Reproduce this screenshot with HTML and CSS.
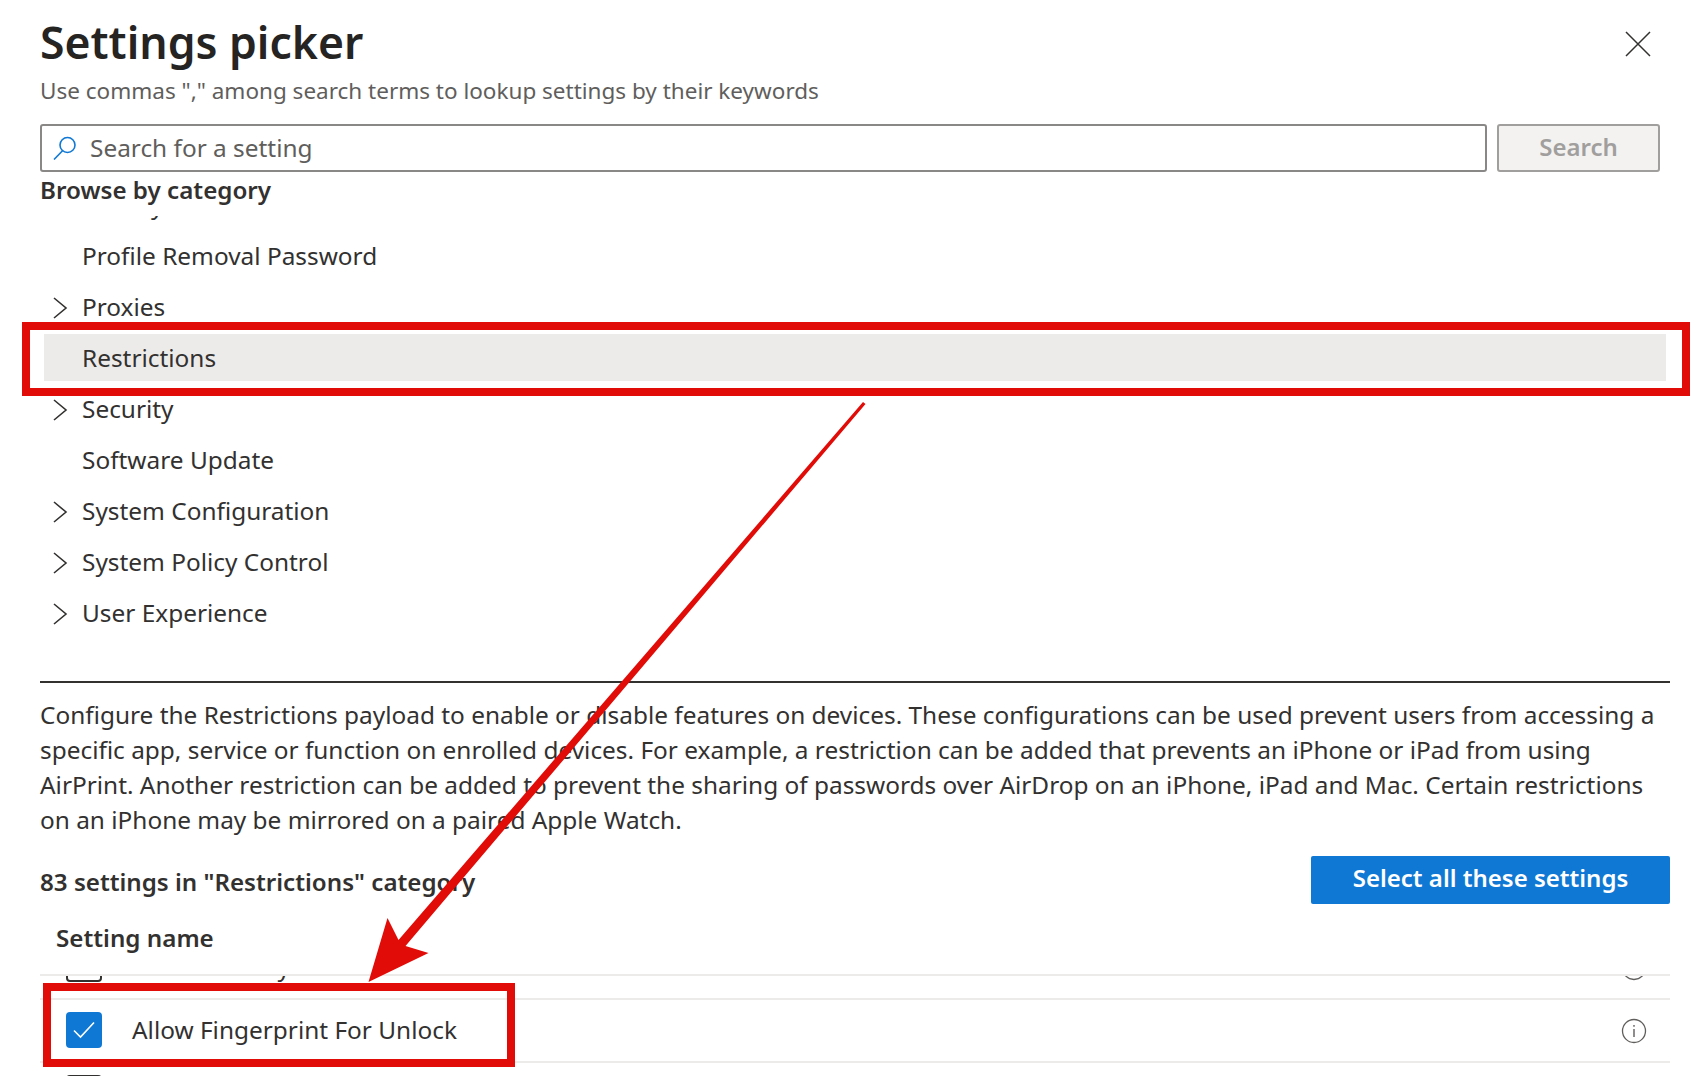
FILE: index.html
```html
<!DOCTYPE html>
<html lang="en">
<head>
  <meta charset="UTF-8" />
  <title>Settings picker</title>
  <link rel="stylesheet" href="styles.css">
</head>
<body>

<div class="picker">
  <header class="picker-head">
    <div>
      <h1>Settings picker</h1>
      <p class="hint">Use commas "," among search terms to lookup settings by their keywords</p>
    </div>
    <button class="close-btn" aria-label="Close">
      <svg width="26" height="26" viewBox="0 0 26 26"><path d="M1 1 L25 25 M25 1 L1 25" stroke="#323130" stroke-width="1.5" fill="none"/></svg>
    </button>
  </header>

  <div class="search-row">
    <div class="search-box">
      <svg width="24" height="24" viewBox="0 0 24 24"><circle cx="14.5" cy="9" r="7.5" stroke="#0f78d4" stroke-width="1.6" fill="none"/><path d="M9.5 14.8 L1 23.5" stroke="#0f78d4" stroke-width="1.6" fill="none"/></svg>
      <input type="text" placeholder="Search for a setting">
    </div>
    <button class="search-btn">Search</button>
  </div>

  <h2 class="browse-title">Browse by category</h2>

  <div class="tree">
    <ul class="tree-list">
      <li class="tree-row"><span class="twisty"></span>Privacy</li>
      <li class="tree-row"><span class="twisty"></span>Profile Removal Password</li>
      <li class="tree-row"><span class="twisty"><svg width="16" height="22" viewBox="0 0 16 22"><path d="M2 1 L14 11 L2 21" stroke="#323130" stroke-width="1.6" fill="none"/></svg></span>Proxies</li>
      <li class="tree-row selected"><span class="twisty"></span>Restrictions</li>
      <li class="tree-row"><span class="twisty"><svg width="16" height="22" viewBox="0 0 16 22"><path d="M2 1 L14 11 L2 21" stroke="#323130" stroke-width="1.6" fill="none"/></svg></span>Security</li>
      <li class="tree-row"><span class="twisty"></span>Software Update</li>
      <li class="tree-row"><span class="twisty"><svg width="16" height="22" viewBox="0 0 16 22"><path d="M2 1 L14 11 L2 21" stroke="#323130" stroke-width="1.6" fill="none"/></svg></span>System Configuration</li>
      <li class="tree-row"><span class="twisty"><svg width="16" height="22" viewBox="0 0 16 22"><path d="M2 1 L14 11 L2 21" stroke="#323130" stroke-width="1.6" fill="none"/></svg></span>System Policy Control</li>
      <li class="tree-row"><span class="twisty"><svg width="16" height="22" viewBox="0 0 16 22"><path d="M2 1 L14 11 L2 21" stroke="#323130" stroke-width="1.6" fill="none"/></svg></span>User Experience</li>
    </ul>
  </div>

  <section class="details">
    <p class="desc">Configure the Restrictions payload to enable or disable features on devices. These configurations can be used prevent users from accessing a<br>
    specific app, service or function on enrolled devices. For example, a restriction can be added that prevents an iPhone or iPad from using<br>
    AirPrint. Another restriction can be added to prevent the sharing of passwords over AirDrop on an iPhone, iPad and Mac. Certain restrictions<br>
    on an iPhone may be mirrored on a paired Apple Watch.</p>

    <div class="count-row">
      <span class="count">83 settings in "Restrictions" category</span>
      <button class="select-all">Select all these settings</button>
    </div>

    <div class="table-head">Setting name</div>
    <div class="table-body">
      <div class="setting">
        <span class="check"></span>
        <span class="setting-name">Allow Find My Friends</span>
        <svg class="info" width="26" height="26" viewBox="0 0 26 26"><circle cx="13" cy="13" r="11.5" stroke="#605e5c" stroke-width="1.3" fill="none"/></svg>
      </div>
      <div class="setting">
        <span class="check on">
          <svg width="24" height="20" viewBox="0 0 24 20"><path d="M2 10.5 L8.5 17 L22 2.5" stroke="#fff" stroke-width="1.6" fill="none"/></svg>
        </span>
        <span class="setting-name">Allow Fingerprint For Unlock</span>
        <svg class="info" width="26" height="26" viewBox="0 0 26 26"><circle cx="13" cy="13" r="11.5" stroke="#605e5c" stroke-width="1.3" fill="none"/><path d="M13 11 V19 M13 7 V8.8" stroke="#605e5c" stroke-width="1.4" fill="none"/></svg>
      </div>
      <div class="setting">
        <span class="check"></span>
      </div>
    </div>
  </section>
</div>

<!-- red markup drawn on top of the screenshot -->
<svg class="markup" width="1704" height="1076" viewBox="0 0 1704 1076">
  <rect x="26" y="326" width="1660" height="66" fill="none" stroke="#e10b07" stroke-width="8"/>
  <rect x="47" y="987" width="464" height="76" fill="none" stroke="#e10b07" stroke-width="8"/>
  <polygon fill="#e10b07" points="863,402 865.5,404 405.5,946 428.5,953 368.5,982 387.5,918 398.5,940"/>
</svg>

</body>
</html>
```

FILE: styles.css
```css
* { box-sizing: border-box; margin: 0; padding: 0; }

html, body {
  width: 1704px;
  height: 1076px;
  overflow: hidden;
}

body {
  position: relative;
  font-family: "Noto Sans", sans-serif;
  font-size: 24.4px;
  color: #323130;
  background: #fff;
}

.picker {
  padding: 0 34px 0 40px;
}

.picker-head {
  display: flex;
  justify-content: space-between;
  height: 124px;
}

h1 {
  font-size: 44.5px;
  font-weight: 600;
  line-height: 60px;
  padding-top: 12px;
  height: 73px;
  color: #252423;
}

.hint {
  color: #605e5c;
  font-size: 22.5px;
  line-height: 36px;
}

.close-btn {
  background: none;
  border: none;
  margin: 31px 19px 0 0;
  height: 26px;
}

.search-row {
  display: flex;
  gap: 10px;
  height: 48px;
  padding-right: 10px;
}

.search-box {
  flex: 1;
  display: flex;
  align-items: center;
  gap: 13px;
  padding-left: 11px;
  border: 2px solid #8a8886;
  border-radius: 3px;
}

.search-box input {
  flex: 1;
  border: none;
  outline: none;
  font: inherit;
  color: #323130;
  padding-bottom: 2px;
}

.search-box input::placeholder {
  color: #605e5c;
  opacity: 1;
}

.search-btn {
  width: 163px;
  background: #f3f2f1;
  border: 2px solid #a19f9d;
  border-radius: 3px;
  font: 600 24px "Noto Sans", sans-serif;
  color: #a19f9d;
  padding-bottom: 4px;
}

.browse-title {
  font-size: 24.2px;
  font-weight: 600;
  line-height: 36px;
  height: 44px;
}

.tree {
  height: 465px;
  overflow: hidden;
  margin-right: 4px;
}

.tree-list {
  list-style: none;
  margin-top: -35px;
}

.tree-row {
  display: flex;
  height: 47px;
  margin: 0 0 4px 4px;
  line-height: 48px;
}

.tree-row.selected {
  background: #edebe9;
}

.twisty {
  display: flex;
  align-items: center;
  width: 38px;
  height: 47px;
  padding: 2px 0 0 8px;
}

.details {
  border-top: 2px solid #323130;
  padding-top: 14px;
}

.desc {
  line-height: 35px;
  white-space: nowrap;
}

.count-row {
  display: flex;
  justify-content: space-between;
  align-items: center;
  margin-top: 19px;
  height: 48px;
}

.count {
  font-size: 24.15px;
  font-weight: 600;
  padding-top: 2px;
}

.select-all {
  width: 359px;
  height: 48px;
  background: #0f78d4;
  color: #fff;
  border: none;
  border-radius: 2px;
  font: 600 24px "Noto Sans", sans-serif;
  padding-bottom: 5px;
}

.table-head {
  height: 72px;
  padding: 16px 0 0 16px;
  font-size: 24.2px;
  font-weight: 600;
  line-height: 36px;
  border-bottom: 2px solid #edebe9;
}

.table-body {
  height: 120px;
  overflow: hidden;
}

.setting {
  display: flex;
  align-items: center;
  height: 63px;
  padding-left: 26px;
  border-bottom: 2px solid #edebe9;
}

.setting:first-child {
  margin-top: -39px;
}

.check {
  display: flex;
  align-items: center;
  justify-content: center;
  width: 36px;
  height: 36px;
  border: 2px solid #323130;
  border-radius: 4px;
  flex: none;
  margin-bottom: 2px;
}

.setting:first-child .check {
  margin-bottom: 7px;
}

.check.on {
  background: #0f78d4;
  border: none;
}

.setting-name {
  margin-left: 30px;
  flex: 1;
  padding-bottom: 3px;
}

.info {
  margin-right: 23px;
}

.markup {
  position: absolute;
  left: 0;
  top: 0;
  pointer-events: none;
}
```
